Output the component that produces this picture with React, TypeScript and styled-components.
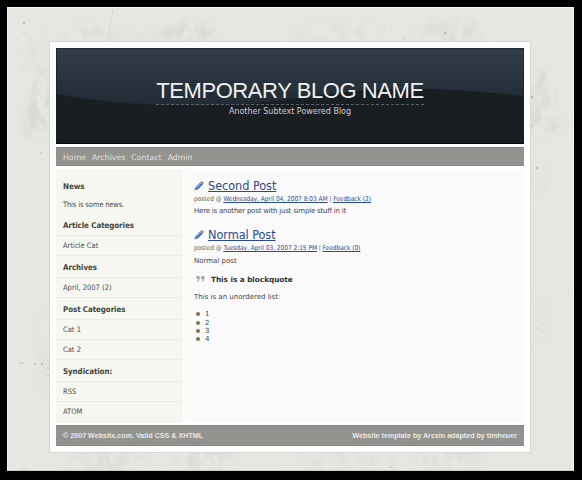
import React from "react";
import styled, { createGlobalStyle } from "styled-components";

const Global = createGlobalStyle`
  * { box-sizing: border-box; }
  html, body { margin: 0; padding: 0; background: #000; }
  ul, h1, h2, h3, p, blockquote { margin: 0; padding: 0; font-weight: normal; }
  ul { list-style: none; }
`;

const sans = `"DejaVu Sans", Verdana, sans-serif`;
const condensed = `"DejaVu Sans Condensed", "DejaVu Sans", Tahoma, sans-serif`;
const arial = `"Liberation Sans", Arial, sans-serif`;

const Frame = styled.div`
  width: 582px;
  height: 480px;
  padding: 7px 8px 9px 7px;
  background: #000;
  overflow: hidden;
`;

const Wall = styled.div`
  display: grid;
  height: 464px;
  background: #e6e7e1;
  border: 1px solid #f4f5ee;
  border-bottom-color: #c9cac4;
`;

const Texture = styled.svg`
  grid-area: 1 / 1;
  display: block;
  width: 565px;
  height: 462px;
`;

const Card = styled.div`
  grid-area: 1 / 1;
  z-index: 1;
  display: flex;
  flex-direction: column;
  width: 482px;
  height: 412px;
  margin: 33px 0 0 41px;
  padding: 6px;
  background: #fff;
  border: 1px solid #d6d7d2;
`;

const Banner = styled.header`
  display: grid;
  height: 96px;
  background: #191e22;
`;

const BannerArt = styled.svg`
  grid-area: 1 / 1;
  display: block;
  width: 468px;
  height: 96px;
`;

const BannerText = styled.div`
  grid-area: 1 / 1;
  z-index: 1;
  display: flex;
  flex-direction: column;
  align-items: center;
  padding-top: 29px;
`;

const Title = styled.h1`
  height: 28px;
  line-height: 27px;
  font-family: ${arial};
  font-size: 22px;
  letter-spacing: -0.42px;
  white-space: nowrap;
  color: #f1f1f1;
  border-bottom: 1px dashed #5a636b;
`;

const Subtitle = styled.p`
  line-height: 14px;
  font-family: ${sans};
  font-size: 8px;
  color: #d2c9d4;
`;

const NavBar = styled.nav`
  display: flex;
  gap: 6px;
  height: 19px;
  margin-top: 3px;
  padding-left: 7px;
  background: #92938e;
  border: solid #868782;
  border-width: 1px 0;
  font-family: ${sans};
  font-size: 7.8px;
  line-height: 19px;
  color: #e4e0e2;
`;

const Columns = styled.div`
  display: grid;
  grid-template-columns: 127px 339px;
  gap: 2px;
  height: 253px;
  margin-top: 3px;
`;

const Sidebar = styled.aside`
  padding-top: 7px;
  background: #f6f7f1;
  font-family: ${condensed};
  font-size: 7.5px;
  color: #4d4d48;
  white-space: nowrap;
`;

const SideHeading = styled.h2<{ $ruled?: boolean }>`
  height: 22px;
  padding-left: 7px;
  line-height: ${(p) => (p.$ruled ? 24 : 22)}px;
  font-size: 7.9px;
  font-weight: bold;
  letter-spacing: -0.06px;
  color: #41453a;
  border-bottom: 1px solid ${(p) => (p.$ruled ? "#ebece1" : "transparent")};
`;

const News = styled.p`
  height: 16px;
  padding-left: 7px;
  line-height: 14px;
  letter-spacing: -0.14px;
`;

const SideItem = styled.li`
  height: 20px;
  padding-left: 7px;
  line-height: 20px;
  border-bottom: 1px solid #ebece1;
`;

const Main = styled.main`
  padding: 8px 0 0 9px;
  background: #fafafa;
  font-family: ${sans};
  font-size: 7px;
  color: #45434a;
  white-space: nowrap;
`;

const PostTitle = styled.h2`
  display: flex;
  align-items: center;
  gap: 4px;
  height: 17px;
  font-family: ${condensed};
  font-size: 12.6px;
  letter-spacing: -0.06px;
  line-height: 17px;
`;

const Link = styled.a`
  color: #2c4a94;
  text-decoration: underline;
  text-decoration-thickness: 1px;
`;

const Pencil = styled.svg`
  display: block;
  width: 10px;
  height: 10px;
`;

const Meta = styled.p`
  height: 11px;
  line-height: 11px;
  font-family: ${condensed};
  font-size: 6.6px;
  letter-spacing: -0.06px;
  color: #68665b;
`;

const Body = styled.p<{ $height: number; $top?: number; $spacing?: number }>`
  height: ${(p) => p.$height}px;
  padding-top: ${(p) => p.$top ?? 0}px;
  line-height: 12px;
  letter-spacing: ${(p) => p.$spacing ?? 0}px;
`;

const Quote = styled.blockquote`
  display: flex;
  align-items: center;
  gap: 6px;
  height: 12px;
  padding-left: 2px;
  font-size: 7.25px;
  font-weight: bold;
  color: #303030;
`;

const QuoteMark = styled.svg`
  display: block;
  width: 9px;
  height: 8px;
`;

const Bullets = styled.ul`
  padding: 7px 0 0 2px;
`;

const Bullet = styled.li`
  display: flex;
  align-items: center;
  gap: 5px;
  height: 8.35px;
  line-height: 8px;
  font-size: 7px;

  &::before {
    content: "";
    width: 4px;
    height: 4px;
    border-radius: 50%;
    background: #85704a;
  }
`;

const Footer = styled.footer`
  display: flex;
  justify-content: space-between;
  height: 21px;
  margin-top: 3px;
  padding: 0 7px;
  background: #92938e;
  border: solid #868782;
  border-width: 1px 0;
  font-family: ${arial};
  font-size: 7.15px;
  font-weight: bold;
  line-height: 20px;
  color: #e9e9e6;
  white-space: nowrap;
`;

// Soft stains on the plaster: centre, radii, opacity.
const stains = [
  [36, 84, 14, 26, 0.7], [32, 112, 24, 20, 0.6], [26, 38, 14, 20, 0.2],
  [80, 26, 30, 9, 0.4], [130, 27, 26, 9, 0.35], [180, 25, 28, 12, 0.6],
  [330, 26, 50, 10, 0.45], [440, 24, 34, 12, 0.6], [536, 88, 12, 24, 0.75],
  [535, 115, 20, 14, 0.55], [530, 170, 10, 18, 0.25], [38, 345, 10, 45, 0.25],
  [100, 452, 42, 10, 0.5], [195, 451, 30, 12, 0.6], [340, 452, 56, 10, 0.35],
  [442, 451, 34, 12, 0.5], [532, 310, 12, 30, 0.15],
];

const specks = [
  [16, 15, 1], [16, 25, 0.7], [15, 61, 0.6], [33, 145, 0.8], [124, 72, 1],
  [524, 89, 1.2], [528, 101, 0.6], [524, 118, 0.8], [529, 160, 0.9], [12, 355, 0.8],
  [15, 355, 0.7], [27, 356, 0.8], [34, 356, 0.9], [40, 360, 0.8], [40, 367, 0.7],
  [437, 25, 1.1], [383, 19, 0.6], [396, 30, 0.7], [530, 320, 0.8], [523, 341, 0.7],
  [560, 286, 0.6], [529, 360, 0.6], [383, 459, 0.7], [54, 444, 0.7], [16, 461, 0.7],
];

const Plaster = () => (
  <Texture viewBox="0 0 565 462" aria-hidden="true">
    <defs>
      <filter id="grain" x="0" y="0" width="100%" height="100%">
        <feTurbulence type="fractalNoise" baseFrequency="0.1 0.06" numOctaves="4" seed="21" />
        <feColorMatrix values="0 0 0 0 0.6  0 0 0 0 0.6  0 0 0 0 0.57  1.9 0 0 0 -0.65" />
        <feGaussianBlur stdDeviation="0.5" />
      </filter>
      <filter id="soft"><feGaussianBlur stdDeviation="5" /></filter>
      <mask id="stained">
        <g filter="url(#soft)">
          {stains.map(([x, y, rx, ry, o], i) => (
            <ellipse key={i} cx={x} cy={y} rx={rx} ry={ry} fill="#fff" opacity={o} />
          ))}
        </g>
      </mask>
    </defs>
    <g mask="url(#stained)">
      <rect width="565" height="462" filter="url(#grain)" />
    </g>
    {specks.map(([x, y, r], i) => (
      <circle key={i} cx={x} cy={y} r={r} fill="#8f908b" opacity="0.6" />
    ))}
    <path d="M105 2Q102 18 99 33M98 445L102 459" fill="none" stroke="#cfd0cb" strokeWidth="0.7" />
  </Texture>
);

const PencilIcon = () => (
  <Pencil viewBox="0 0 10 10" aria-hidden="true">
    <path d="M.5 9.2 1.5 6.2 6.6 1.1 8.8 3.3 3.7 8.4Z" fill="#4b7bd0" />
    <path d="M2.3 6.7 7 2" stroke="#8db5ef" strokeWidth="1" />
    <path d="M3.5 8.2 8.5 3.2" stroke="#3d64b4" strokeWidth=".8" />
    <path d="M6.6 1.1 7.4.4Q8.3 0 9.2.8T9.5 2.6L8.8 3.3Z" fill="#b97a70" />
    <path d="M.5 9.2 1.1 7.3 2.4 8.6Z" fill="#647394" />
  </Pencil>
);

const posts = [
  { title: "Second Post", date: "Wednesday, April 04, 2007 8:03 AM", feedback: "Feedback (2)" },
  { title: "Normal Post", date: "Tuesday, April 03, 2007 2:15 PM", feedback: "Feedback (0)" },
];

const PostHead = ({ post }: { post: (typeof posts)[number] }) => (
  <>
    <PostTitle><PencilIcon /><Link>{post.title}</Link></PostTitle>
    <Meta>posted @ <Link>{post.date}</Link> | <Link>{post.feedback}</Link></Meta>
  </>
);

const sections = [
  { heading: "Article Categories", items: ["Article Cat"] },
  { heading: "Archives", items: ["April, 2007 (2)"] },
  { heading: "Post Categories", items: ["Cat 1", "Cat 2"] },
  { heading: "Syndication:", items: ["RSS", "ATOM"] },
];

export default function App() {
  return (
    <Frame>
      <Global />
      <Wall>
        <Plaster />
        <Card>
          <Banner>
            <BannerArt viewBox="0 0 468 96" aria-hidden="true">
              <defs>
                <linearGradient id="sky" x1="0" y1="0" x2="0" y2="1">
                  <stop offset="0" stopColor="#323e48" />
                  <stop offset="1" stopColor="#222b35" />
                </linearGradient>
              </defs>
              <path d="M0 0H468V48Q370 36 290 44C245 49 205 57 155 57Q70 59 0 46Z" fill="url(#sky)" />
              <path d="M.5 96V.5H467.5V96" fill="none" stroke="#141c24" opacity=".6" />
              <path d="M0 95.5H468" stroke="#080c10" />
            </BannerArt>
            <BannerText>
              <Title>TEMPORARY BLOG NAME</Title>
              <Subtitle>Another Subtext Powered Blog</Subtitle>
            </BannerText>
          </Banner>
          <NavBar>
            {["Home", "Archives", "Contact", "Admin"].map((label) => <span key={label}>{label}</span>)}
          </NavBar>
          <Columns>
            <Sidebar>
              <SideHeading>News</SideHeading>
              <News>This is some news.</News>
              {sections.map(({ heading, items }) => (
                <section key={heading}>
                  <SideHeading $ruled>{heading}</SideHeading>
                  <ul>{items.map((item) => <SideItem key={item}>{item}</SideItem>)}</ul>
                </section>
              ))}
            </Sidebar>
            <Main>
              <PostHead post={posts[0]} />
              <Body $height={21} $spacing={-0.21}>Here is another post with just simple stuff in it</Body>
              <PostHead post={posts[1]} />
              <Body $height={19} $top={1}>Normal post</Body>
              <Quote>
                <QuoteMark viewBox="0 0 9 8" aria-hidden="true">
                  <path d="M.5 1H3.6V4Q3.5 6.5 1.2 7V6Q2.2 5.4 2.2 4H.5ZM5.2 1H8.3V4Q8.2 6.5 5.9 7V6Q6.9 5.4 6.9 4H5.2Z" fill="#a5a997" />
                </QuoteMark>
                This is a blockquote
              </Quote>
              <Body $height={18} $top={6}>This is an unordered list:</Body>
              <Bullets>
                {[1, 2, 3, 4].map((n) => <Bullet key={n}>{n}</Bullet>)}
              </Bullets>
            </Main>
          </Columns>
          <Footer>
            <span>© 2007 Website.com. Valid CSS &amp; XHTML</span>
            <span>Website template by Arcsin adapted by timheuer</span>
          </Footer>
        </Card>
      </Wall>
    </Frame>
  );
}
